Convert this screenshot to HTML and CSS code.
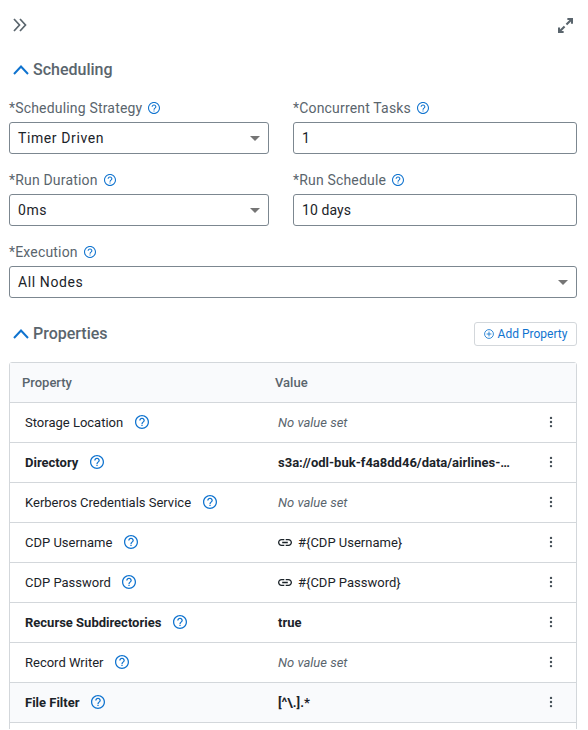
FILE: index.html
```html
<!DOCTYPE html>
<html lang="en">
<head>
<meta charset="utf-8">
<title>Processor configuration</title>
<link rel="stylesheet" href="styles.css">
</head>
<body>
<svg class="defs" aria-hidden="true">
  <symbol id="help" viewBox="2 2 20 20"><path d="M11.100 17.800h1.800V16h-1.800v1.800zM12 2C6.480 2 2 6.480 2 12s4.480 10 10 10 10-4.480 10-10S17.520 2 12 2zm0 18.200c-4.520 0-8.200-3.680-8.200-8.200S7.480 3.800 12 3.800s8.200 3.680 8.200 8.200-3.680 8.200-8.200 8.200zM12 6c-2.210 0-4 1.790-4 4h1.800c0-1.200 1-2.200 2.200-2.200s2.200 1 2.200 2.200c0 2-3.100 1.850-3.100 5h1.800c0-2.250 3.100-2.500 3.100-5 0-2.210-1.790-4-4-4z"/></symbol>
  <symbol id="up" viewBox="0 0 16 10"><path d="M1 9 8 1.500 15 9" fill="none" stroke="currentColor" stroke-width="2"/></symbol>
  <symbol id="link" viewBox="2 7 20 10"><path d="M3.900 12c0-1.710 1.390-3.100 3.100-3.100h4V7H7c-2.760 0-5 2.240-5 5s2.240 5 5 5h4v-1.900H7c-1.710 0-3.100-1.390-3.100-3.100zM8 13h8v-2H8v2zm9-6h-4v1.900h4c1.710 0 3.100 1.390 3.100 3.100s-1.390 3.100-3.100 3.100h-4V17h4c2.760 0 5-2.240 5-5s-2.240-5-5-5z"/></symbol>
  <symbol id="more" viewBox="0 0 4 12"><circle cx="2" cy="1.900" r="1.200"/><circle cx="2" cy="6" r="1.200"/><circle cx="2" cy="10.100" r="1.200"/></symbol>
</svg>
<main class="panel">
  <header class="toolbar">
    <svg class="collapse" viewBox="0 0 14 14"><path d="M1 1l5.500 6L1 13M7 1l5.500 6L7 13" fill="none" stroke="currentColor" stroke-width="1.700"/></svg>
    <svg class="expand" viewBox="0 0 16 16"><path d="M10 1.100h4.900V6M1.100 10v4.900H6M14.900 1.100 9 7M1.100 14.900 7 9" fill="none" stroke="currentColor" stroke-width="2.200"/></svg>
  </header>

  <div class="section-head"><h2><svg class="up"><use href="#up"/></svg>Scheduling</h2></div>
  <form class="fields">
    <div class="field"><label>*Scheduling Strategy<svg class="help"><use href="#help"/></svg></label><div class="control select">Timer Driven</div></div>
    <div class="field"><label>*Concurrent Tasks<svg class="help"><use href="#help"/></svg></label><div class="control">1</div></div>
    <div class="field"><label>*Run Duration<svg class="help"><use href="#help"/></svg></label><div class="control select">0ms</div></div>
    <div class="field"><label>*Run Schedule<svg class="help"><use href="#help"/></svg></label><div class="control tight">10 days</div></div>
    <div class="field wide"><label>*Execution<svg class="help"><use href="#help"/></svg></label><div class="control select">All Nodes</div></div>
  </form>

  <div class="section-head properties">
    <h2><svg class="up"><use href="#up"/></svg>Properties</h2>
    <button class="add" type="button"><svg viewBox="0 0 12 12"><circle cx="6" cy="6" r="5.300"/><path d="M6 3.100v5.800M3.100 6h5.800"/></svg>Add Property</button>
  </div>

  <div class="table">
    <div class="row head"><span>Property</span><span>Value</span></div>
    <div class="row"><div class="name">Storage Location<svg><use href="#help"/></svg></div><div class="value unset">No value set</div><svg class="more"><use href="#more"/></svg></div>
    <div class="row required"><div class="name">Directory<svg><use href="#help"/></svg></div><div class="value">s3a://odl-buk-f4a8dd46/data/airlines-…</div><svg class="more"><use href="#more"/></svg></div>
    <div class="row"><div class="name">Kerberos Credentials Service<svg><use href="#help"/></svg></div><div class="value unset">No value set</div><svg class="more"><use href="#more"/></svg></div>
    <div class="row"><div class="name">CDP Username<svg><use href="#help"/></svg></div><div class="value"><svg class="link"><use href="#link"/></svg>#{CDP Username}</div><svg class="more"><use href="#more"/></svg></div>
    <div class="row"><div class="name">CDP Password<svg><use href="#help"/></svg></div><div class="value"><svg class="link"><use href="#link"/></svg>#{CDP Password}</div><svg class="more"><use href="#more"/></svg></div>
    <div class="row required"><div class="name">Recurse Subdirectories<svg><use href="#help"/></svg></div><div class="value">true</div><svg class="more"><use href="#more"/></svg></div>
    <div class="row"><div class="name">Record Writer<svg><use href="#help"/></svg></div><div class="value unset">No value set</div><svg class="more"><use href="#more"/></svg></div>
    <div class="row required active"><div class="name">File Filter<svg><use href="#help"/></svg></div><div class="value">[^\.].*</div><svg class="more"><use href="#more"/></svg></div>
    <div class="row next"></div>
  </div>
</main>
</body>
</html>
```
FILE: styles.css
```css
* { box-sizing: border-box; }
body {
  margin: 0;
  height: 730px;
  overflow: hidden;
  background: #fff;
  color: #1b2329;
  font-family: Roboto, "Liberation Sans", sans-serif;
  font-size: 13px;
}
svg { display: block; flex: none; fill: currentColor; }
.defs { display: none; }
.panel { padding: 0 11px 0 9px; height: 729px; overflow: hidden; }

.toolbar {
  display: flex;
  justify-content: space-between;
  align-items: center;
  height: 50px;
  padding: 0 4px 0 4px;
  color: #5a656d;
}
.collapse { width: 14px; height: 14px; }
.expand { width: 15px; height: 15px; }

.section-head {
  display: flex;
  justify-content: space-between;
  align-items: center;
  height: 40px;
}
h2 {
  display: flex;
  align-items: center;
  gap: 4px;
  margin: 0;
  padding: 0 0 1px 4px;
  color: #5a656d;
  font-size: 16px;
  font-weight: 500;
}
.up { width: 16px; height: 10px; color: #0f73cf; }

.fields {
  display: grid;
  grid-template-columns: 260px 284px;
  column-gap: 24px;
  row-gap: 12px;
  padding-top: 4px;
}
.wide { grid-column: 1 / -1; }
label {
  display: flex;
  align-items: center;
  gap: 6px;
  height: 28px;
  color: #5a656d;
  font-size: 14px;
  letter-spacing: 0.18px;
}
.help { width: 12px; height: 12px; color: #0f73cf; }
.control {
  display: flex;
  align-items: center;
  justify-content: space-between;
  height: 32px;
  padding: 0 8px;
  border: 1px solid #7c8790;
  border-radius: 3px;
  font-size: 14px;
  letter-spacing: 0.6px;
}
.tight { letter-spacing: 0.1px; }
.select::after {
  content: "";
  border: 5px solid transparent;
  border-top-color: #757575;
  border-bottom: 0;
}

.properties { margin-top: 16px; }
.add {
  display: flex;
  align-items: center;
  justify-content: center;
  gap: 4px;
  width: 103px;
  height: 24px;
  padding: 0;
  border: 1px solid #d3d7db;
  border-radius: 3px;
  background: #fff;
  color: #0f73cf;
  font: 12px Roboto, sans-serif;
}
.add svg { width: 10px; height: 10px; fill: none; stroke: currentColor; }

.table {
  margin-top: 8px;
  border: 1px solid #d3d7db;
  border-radius: 3px 3px 0 0;
}
.row {
  display: grid;
  grid-template-columns: 253px 1fr 26px;
  align-items: center;
  height: 40px;
  padding: 0 12px 0 15px;
  border-bottom: 1px solid #d3d7db;
}
.head {
  padding-left: 12px;
  background: #f9fafc;
  color: #5a656d;
  font-weight: 500;
}
.name, .value { display: flex; align-items: center; white-space: nowrap; }
.name { gap: 11.5px; }
.name svg { width: 14px; height: 14px; margin-bottom: 1px; color: #0f73cf; }
.value { gap: 6px; }
.unset { color: #5a656d; font-style: italic; }
.required { font-weight: 700; }
.active { background: #f9fafc; }
.link { width: 14px; height: 7px; }
.more { width: 4px; height: 12px; margin-bottom: 1px; justify-self: center; color: #444f57; }
.next { height: 40px; }
```
